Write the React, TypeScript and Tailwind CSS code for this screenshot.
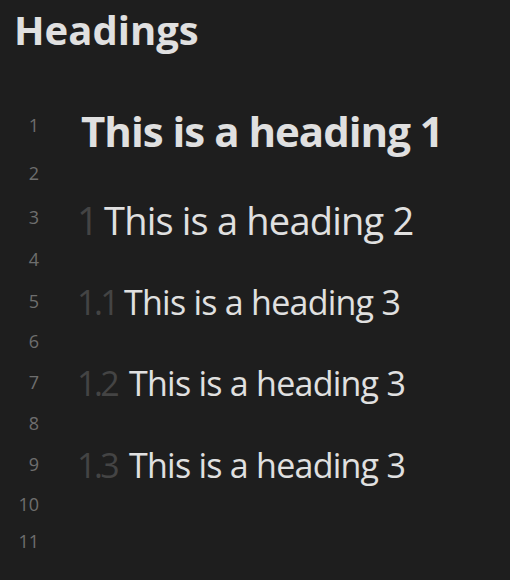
import React from "react";

type Line = {
  n: number;
  h: string;
  level?: 1 | 2 | 3;
  prefix?: string;
  prefixW?: string;
  text?: string;
  shift?: string;
};

const lines: Line[] = [
  { n: 1, h: "h-[50px]", level: 1, text: "This is a heading 1", shift: "mt-[12px]" },
  { n: 2, h: "h-[46px]" },
  { n: 3, h: "h-[42px]", level: 2, prefix: "1", prefixW: "w-[27px]", text: "This is a heading 2", shift: "mt-[6px]" },
  { n: 4, h: "h-[42px]" },
  { n: 5, h: "h-[41px]", level: 3, prefix: "1.1", prefixW: "w-[47px]", text: "This is a heading 3", shift: "mt-[2px]" },
  { n: 6, h: "h-[40px]" },
  { n: 7, h: "h-[41px]", level: 3, prefix: "1.2", prefixW: "w-[52px]", text: "This is a heading 3", shift: "mt-[2px]" },
  { n: 8, h: "h-[41px]" },
  { n: 9, h: "h-[41px]", level: 3, prefix: "1.3", prefixW: "w-[52px]", text: "This is a heading 3", shift: "mt-[2px]" },
  { n: 10, h: "h-[40px]" },
  { n: 11, h: "h-[34px]" },
];

const levelClass: Record<number, string> = {
  1: "text-[42px] font-bold tracking-[-1px]",
  2: "text-[38px] font-[510] tracking-[-0.8px]",
  3: "text-[34px] font-[510] tracking-[-0.75px]",
};

export default function App() {
  return (
    <div
      className="w-[510px] h-[580px] bg-[#1e1e1e] overflow-hidden"
      style={{ fontFamily: '"Open Sans", "Noto Sans", sans-serif' }}
    >
      <div className="h-[100px] pl-[14px] pt-[2px]">
        <h1 className="text-[40px] font-bold leading-[56px] text-[#e0e0e0]">Headings</h1>
      </div>
      <div className="flex flex-col">
        {lines.map((l) => (
          <div key={l.n} className={`flex items-center ${l.h}`}>
            <div className="w-[40px] shrink-0 pr-[1px] text-right text-[18px] leading-none text-[#6e6e6e]">
              {l.n}
            </div>
            {l.level ? (
              <div
                className={`flex items-baseline pl-[41px] whitespace-nowrap leading-none text-[#e0e0e0] ${levelClass[l.level]} ${l.shift ?? ""}`}
              >
                {l.prefix ? (
                  <span className={`inline-block shrink-0 ml-[-4px] tracking-[-2.5px] text-[#444444] ${l.prefixW ?? ""}`}>
                    {l.prefix}
                  </span>
                ) : null}
                <span>{l.text}</span>
              </div>
            ) : null}
          </div>
        ))}
      </div>
    </div>
  );
}
